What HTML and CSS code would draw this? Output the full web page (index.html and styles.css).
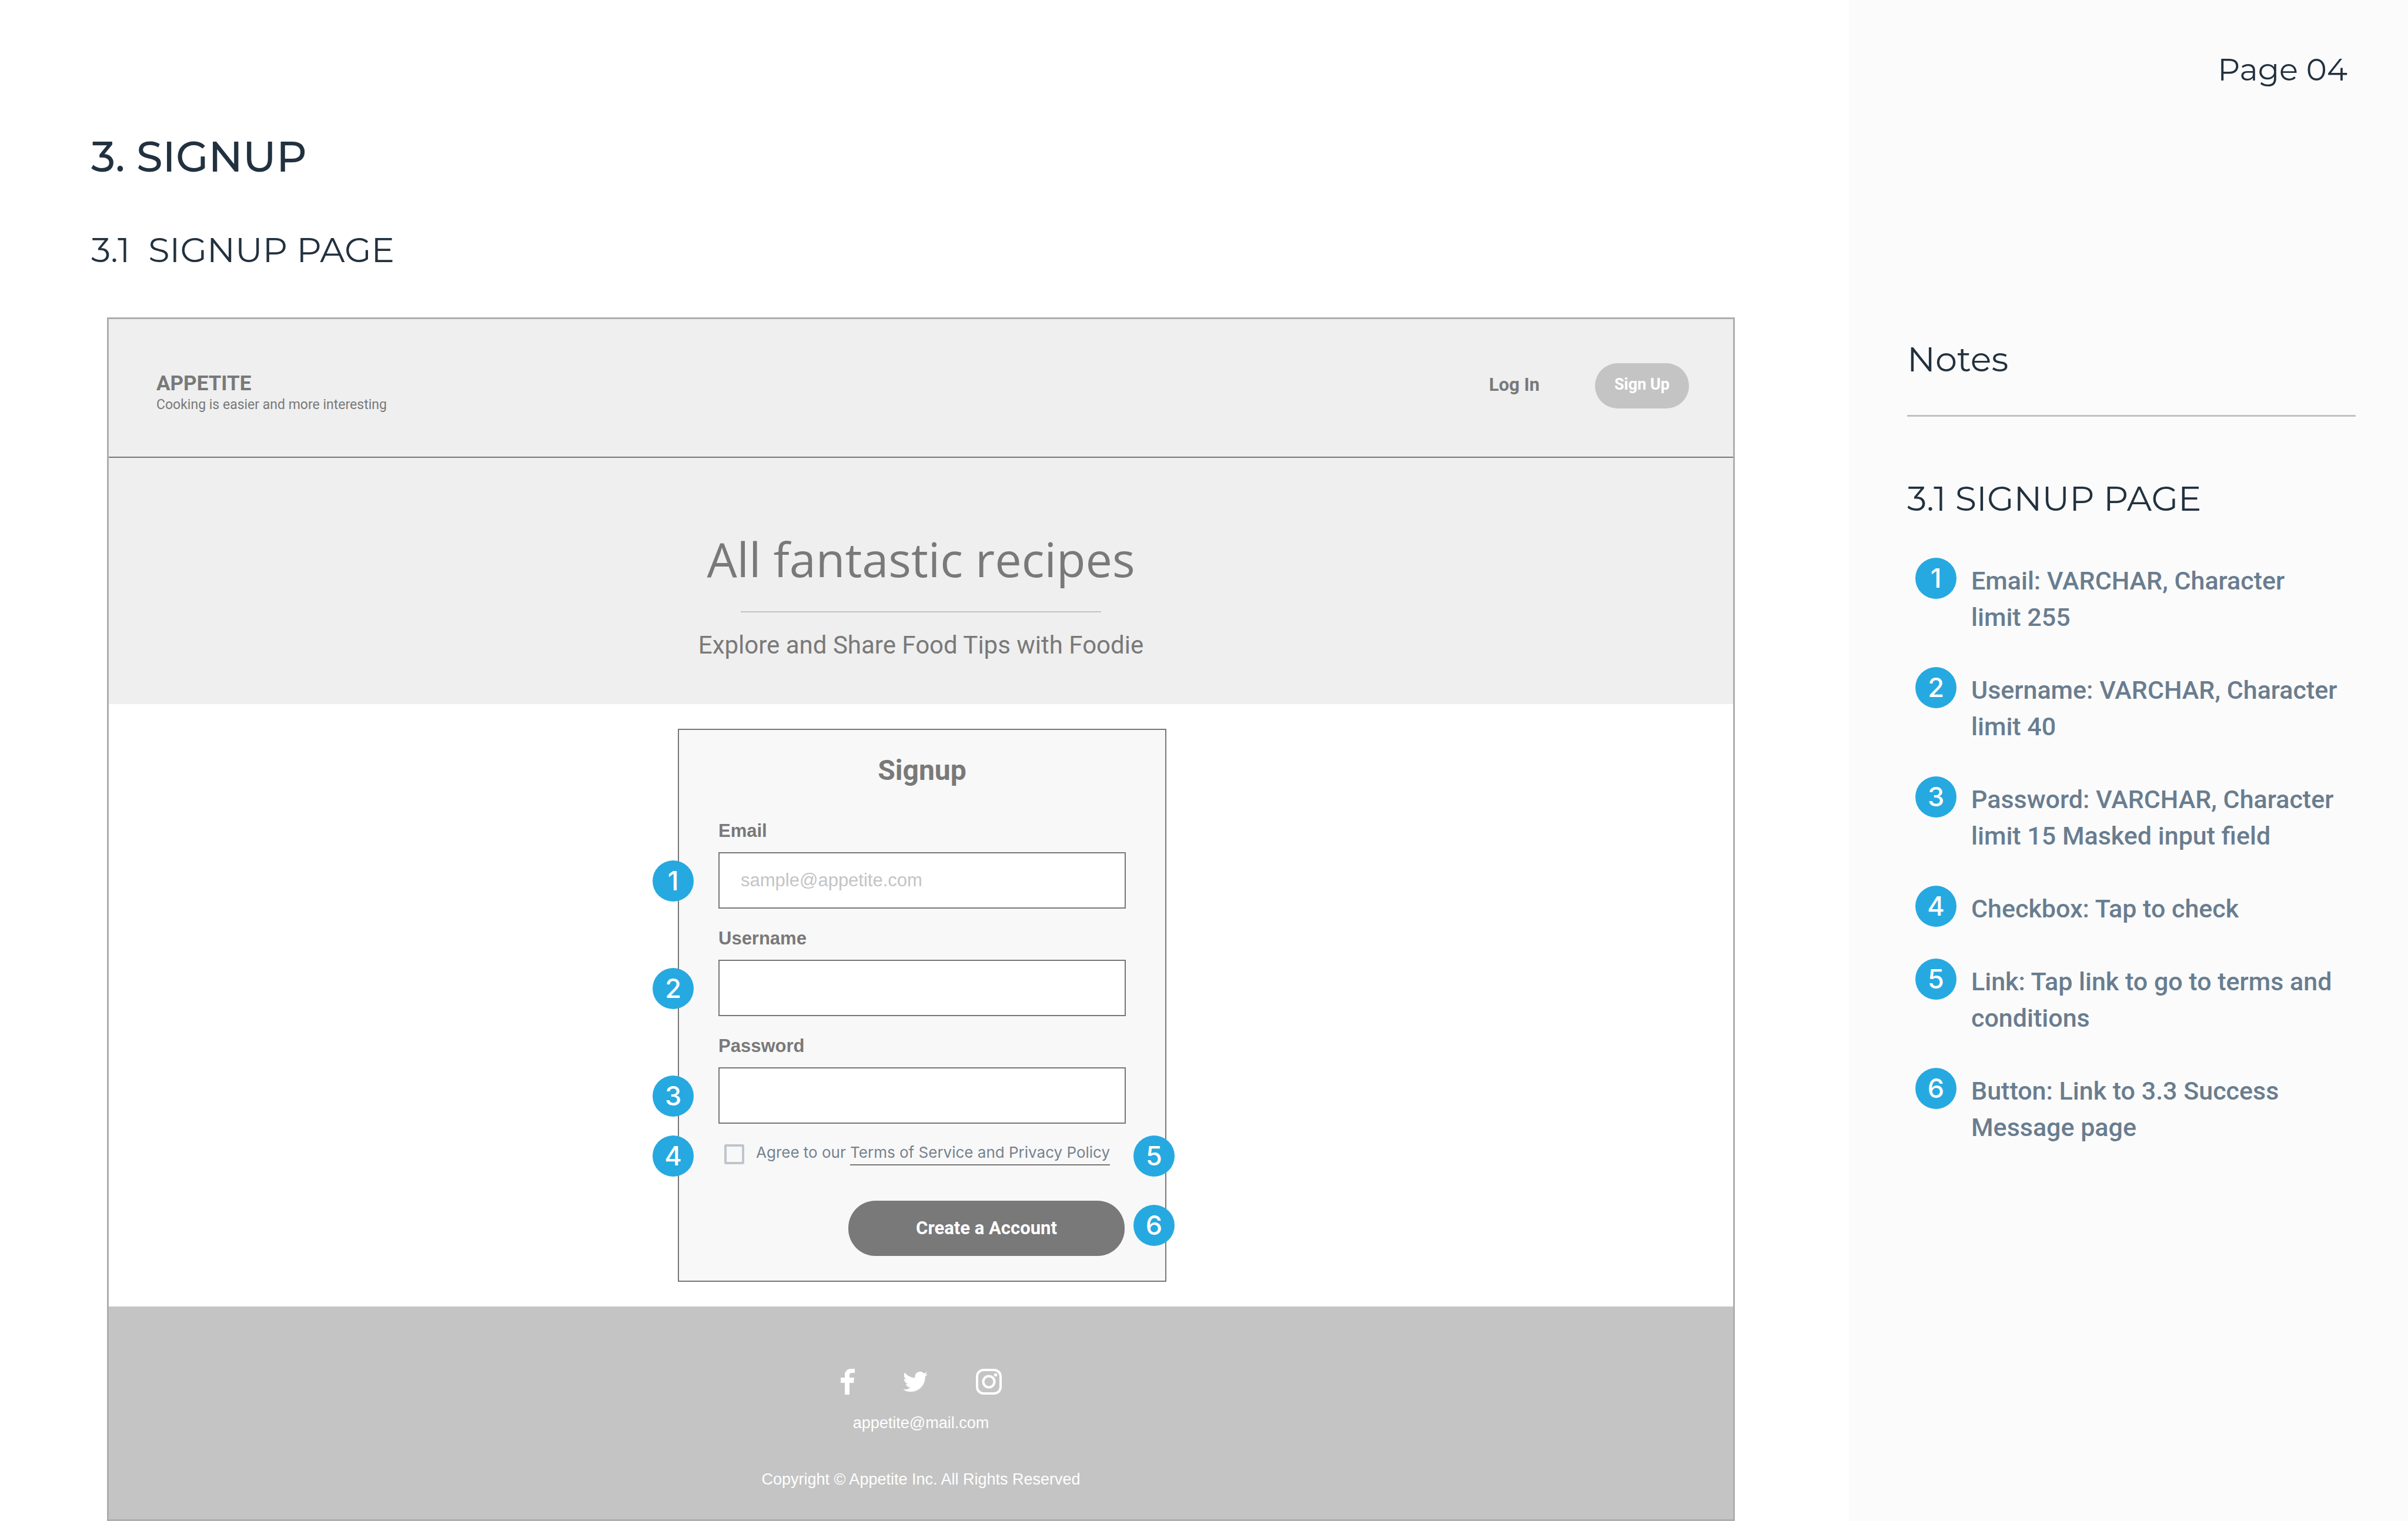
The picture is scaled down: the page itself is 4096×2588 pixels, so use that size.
FILE: index.html
```html
<!DOCTYPE html>
<html lang="en">
<head>
<meta charset="utf-8">
<title>3. Signup – Page 04</title>
<link rel="stylesheet" href="styles.css">
</head>
<body>
<div class="sheet">
  <main class="board">
    <header class="board-head">
      <h1 class="section-title">3. SIGNUP</h1>
      <h2 class="screen-title">3.1&nbsp; SIGNUP PAGE</h2>
    </header>

    <div class="frame">
      <header class="site-head">
        <div class="brand">
          <strong class="brand-name">APPETITE</strong>
          <span class="brand-tag">Cooking is easier and more interesting</span>
        </div>
        <nav class="site-nav">
          <a class="login" href="#login">Log In</a>
          <button class="pill-light" type="button">Sign Up</button>
        </nav>
      </header>

      <section class="hero">
        <p class="hero-title">All fantastic recipes</p>
        <hr class="hero-rule">
        <p class="hero-sub">Explore and Share Food Tips with Foodie</p>
      </section>

      <section class="stage">
        <form class="card">
          <h3 class="card-title">Signup</h3>
          <div class="field">
            <label for="email">Email</label>
            <input id="email" type="email" placeholder="sample@appetite.com">
            <span class="badge pin pin-left">1</span>
          </div>
          <div class="field">
            <label for="username">Username</label>
            <input id="username" type="text">
            <span class="badge pin pin-left">2</span>
          </div>
          <div class="field">
            <label for="password">Password</label>
            <input id="password" type="password">
            <span class="badge pin pin-left">3</span>
          </div>
          <div class="terms">
            <input id="agree" type="checkbox">
            <p class="terms-text"><label for="agree">Agree to our</label> <a href="#terms">Terms of Service and Privacy Policy</a></p>
            <span class="badge pin pin-left">4</span>
            <span class="badge pin pin-right">5</span>
          </div>
          <div class="submit">
            <button class="pill-dark" type="submit">Create a Account</button>
            <span class="badge pin pin-right">6</span>
          </div>
        </form>
      </section>

      <footer class="site-foot">
        <div class="social">
          <a href="#facebook" aria-label="Facebook"><svg width="24" height="44" viewBox="0 0 24 44"><path d="M7 44V24H0V15H7V11C7 4 11 0 18 0H24V7H19C16 7 15 8.500 15 11V15H23L22 24H15V44Z"/></svg></a>
          <a href="#twitter" aria-label="Twitter"><svg width="42" height="36" viewBox="0 2 24 20"><path d="M23.950 4.570a10 10 0 0 1-2.820.770 4.960 4.960 0 0 0 2.160-2.720c-.950.550-2 .950-3.130 1.180a4.920 4.920 0 0 0-8.380 4.480C7.690 8.090 4.070 6.130 1.640 3.160a4.820 4.820 0 0 0-.670 2.480c0 1.710.870 3.210 2.190 4.100a4.900 4.900 0 0 1-2.230-.620v.060a4.920 4.920 0 0 0 3.950 4.830 5 5 0 0 1-2.210.080 4.940 4.940 0 0 0 4.600 3.420A9.870 9.870 0 0 1 0 19.540a14 14 0 0 0 7.550 2.210c9.050 0 14-7.500 14-13.980 0-.210 0-.420-.020-.630a9.940 9.940 0 0 0 2.460-2.550z"/></svg></a>
          <a href="#instagram" aria-label="Instagram"><svg width="44" height="44" viewBox="0 0 44 44"><rect x="2" y="2" width="40" height="40" rx="11" fill="none" stroke="currentColor" stroke-width="4"/><circle cx="22" cy="22" r="9.500" fill="none" stroke="currentColor" stroke-width="4"/><circle cx="33.500" cy="10.500" r="2.800"/></svg></a>
        </div>
        <a class="mail" href="mailto:appetite@mail.com">appetite@mail.com</a>
        <p class="copyright">Copyright © Appetite Inc. All Rights Reserved</p>
      </footer>
    </div>
  </main>

  <aside class="notes">
    <p class="page-no">Page 04</p>
    <h2 class="notes-title">Notes</h2>
    <h3 class="notes-sub">3.1 SIGNUP PAGE</h3>
    <ol class="note-list">
      <li><span class="badge">1</span><p>Email: VARCHAR, Character<br>limit 255</p></li>
      <li><span class="badge">2</span><p>Username: VARCHAR, Character<br>limit 40</p></li>
      <li><span class="badge">3</span><p>Password: VARCHAR, Character<br>limit 15 Masked input field</p></li>
      <li><span class="badge">4</span><p>Checkbox: Tap to check</p></li>
      <li><span class="badge">5</span><p>Link: Tap link to go to terms and conditions</p></li>
      <li><span class="badge">6</span><p>Button: Link to 3.3 Success Message page</p></li>
    </ol>
  </aside>
</div>
</body>
</html>
```
FILE: styles.css
```css
:root {
  --ink: #22313f;
  --grey: #797979;
  --line: #777;
  --silver: #c4c4c4;
  --slate: #697d8f;
  --blue: #26a9e0;
}

* { box-sizing: border-box; }

body, h1, h2, h3, p, ol { margin: 0; padding: 0; }

body {
  background: #fff;
  color: var(--grey);
  font-family: Roboto, "Liberation Sans", sans-serif;
}

a { color: inherit; text-decoration: none; }
button { border: 0; font: inherit; }

.sheet {
  display: grid;
  grid-template-columns: 3145fr 951fr;
  min-height: 100vh;
}

/* Left side: title block and wireframe */
.board {
  display: flex;
  flex-direction: column;
  padding: 220px 194px 0 182px;
}

.board-head {
  margin: 0 0 69px -27px;
  color: var(--ink);
  font-family: Montserrat, Inter, sans-serif;
}

.section-title { font-size: 72px; font-weight: 500; line-height: 92px; }
.screen-title { margin-top: 67px; font-size: 59px; font-weight: 400; line-height: 92px; }

.frame {
  flex: 1;
  display: flex;
  flex-direction: column;
  border: 3px solid #aeaeae;
}

.site-head {
  display: flex;
  justify-content: space-between;
  align-items: flex-start;
  padding: 75px 75px 72px 81px;
  border-bottom: 2px solid var(--line);
  background: #efefef;
}

.brand { display: flex; flex-direction: column; padding-top: 15px; }
.brand-name { font-size: 35px; line-height: 40px; }
.brand-tag { font-size: 23px; line-height: 32px; }

.site-nav { display: flex; align-items: center; gap: 94px; }
.login { padding-bottom: 4px; font-size: 31px; font-weight: 700; }

.pill-light {
  padding: 0 33px 4px;
  border-radius: 39px;
  background: var(--silver);
  color: #fff;
  font-size: 27px;
  font-weight: 700;
  line-height: 73px;
}

.hero {
  display: flex;
  flex-direction: column;
  align-items: center;
  padding: 117px 0 68px;
  background: #efefef;
}

.hero-title { font-family: "Open Sans", sans-serif; font-size: 81px; line-height: 110px; }
.hero-rule { width: 613px; margin: 34px 0 24px; border: 0; border-top: 2px solid var(--silver); }
.hero-sub { font-size: 42px; line-height: 64px; }

.stage { display: flex; justify-content: center; padding: 42px 0 42px 4px; }

/* Signup card */
.card {
  width: 831px;
  padding: 40px 67px 42px;
  border: 2px solid var(--line);
  background: #f8f8f8;
}

.card-title { margin-bottom: 53px; font-size: 48px; line-height: 58px; text-align: center; }

.field { position: relative; margin-bottom: 30px; }

.field label {
  display: block;
  padding-bottom: 15px;
  font: 700 31px/42px "Liberation Sans", sans-serif;
}

.field input {
  display: block;
  width: 100%;
  height: 96px;
  padding: 0 36px;
  border: 2px solid var(--line);
  background: #fff;
  color: var(--grey);
  font: 31px "Liberation Sans", sans-serif;
}

.field input::placeholder { color: var(--silver); }

.terms {
  position: relative;
  display: flex;
  align-items: center;
  gap: 20px;
  padding: 2px 10px;
}

.terms input {
  appearance: none;
  width: 34px;
  height: 34px;
  margin: 0;
  border: 4px solid #bec5cc;
  border-radius: 3px;
}

.terms-text { padding-bottom: 6px; color: #75828f; font: 26px/34px Inter, sans-serif; }
.terms-text a { padding-bottom: 5px; border-bottom: 2px solid var(--line); }

.submit {
  position: relative;
  display: flex;
  justify-content: flex-end;
  margin-top: 57px;
  padding-right: 2px;
}

.pill-dark {
  width: 470px;
  border-radius: 46px;
  background: var(--grey);
  color: #fff;
  font-size: 31px;
  font-weight: 700;
  line-height: 92px;
}

/* Numbered callouts */
.badge {
  display: block;
  width: 70px;
  height: 70px;
  border-radius: 50%;
  background: var(--blue);
  color: #fff;
  font: 500 45px/70px Inter, sans-serif;
  text-align: center;
}

.pin { position: absolute; bottom: 12px; }
.pin-left { left: -112px; }
.pin-right { right: -83px; }
.terms .pin { bottom: -16px; }
.submit .pin { bottom: 17px; }

/* Wireframe footer */
.site-foot {
  flex: 1;
  display: flex;
  flex-direction: column;
  align-items: center;
  padding: 106px 0 40px;
  background: var(--silver);
  color: #fff;
  font: 27px/32px "Liberation Sans", sans-serif;
}

.social { display: flex; align-items: center; gap: 82px; }
.social svg { display: block; fill: currentColor; }
.mail { margin-top: 32px; }
.copyright { margin-top: 64px; }

/* Right side: notes */
.notes {
  padding: 86px 89px 80px 99px;
  background: #fbfbfb;
  color: var(--ink);
  font-family: Montserrat, Inter, sans-serif;
}

.page-no { padding-right: 14px; font-size: 53px; line-height: 64px; text-align: right; }

.notes-title {
  margin-top: 425px;
  padding-bottom: 59px;
  border-bottom: 3px solid #c0c0c0;
  font-size: 59px;
  font-weight: 400;
  line-height: 72px;
}

.notes-sub { margin-top: 103px; font-size: 59px; font-weight: 400; line-height: 72px; }

.note-list { display: grid; gap: 54px; margin-top: 65px; padding-left: 14px; list-style: none; }

.note-list li {
  display: grid;
  grid-template-columns: 70px 1fr;
  align-items: start;
  gap: 25px;
}

.note-list p {
  padding-top: 8px;
  color: var(--slate);
  font: 500 43px/62px Roboto, sans-serif;
}
```
